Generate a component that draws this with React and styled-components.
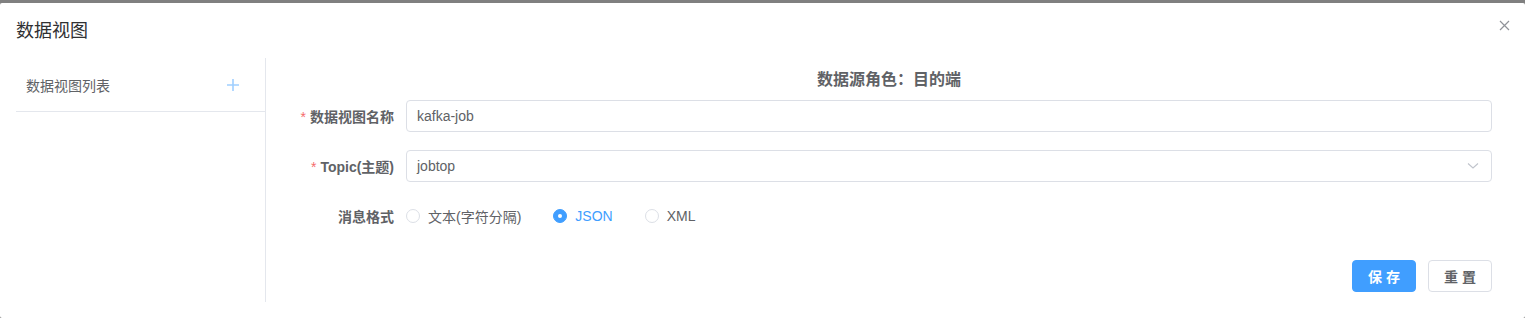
import React, { useState } from 'react'
import styled, { createGlobalStyle } from 'styled-components'

const Global = createGlobalStyle`
  html, body { margin: 0; padding: 0; background: #808080; }
  body {
    font-family: "Helvetica Neue", "Liberation Sans", "Noto Sans CJK SC", sans-serif;
    -webkit-font-smoothing: antialiased;
  }
`

const Dialog = styled.div`
  margin-top: 3px;
  width: 1525px;
  height: 315px;
  background: #fff;
  border-radius: 2px;
  box-sizing: border-box;
  display: flex;
  flex-direction: column;
`

const Header = styled.div`
  display: flex;
  align-items: center;
  justify-content: space-between;
  padding: 16px 16px 15px 16px;
  height: 24px;
`

const Title = styled.span`
  font-size: 18px;
  line-height: 24px;
  color: #303133;
`

const Close = styled.button`
  border: none;
  background: none;
  padding: 0;
  margin: -12px -2px 0 0;
  width: 14px;
  height: 14px;
  display: flex;
  align-items: center;
  justify-content: center;
  cursor: pointer;
`

const Body = styled.div`
  display: flex;
  padding: 0 13px 0 16px;
  height: 244px;
`

const Side = styled.aside`
  width: 249px;
  border-right: 1px solid #e4e7ed;
  display: flex;
  flex-direction: column;
`

const SideHead = styled.div`
  height: 53px;
  border-bottom: 1px solid #e4e7ed;
  display: flex;
  align-items: center;
  justify-content: space-between;
  padding: 0 26px 0 10px;
  font-size: 14px;
  color: #606266;
`

const Main = styled.section`
  flex: 1;
  padding: 10px 20px 0 20px;
  display: flex;
  flex-direction: column;
`

const RoleTitle = styled.h3`
  margin: 0 0 8px 0;
  text-align: center;
  font-size: 16px;
  line-height: 24px;
  font-weight: bold;
  color: #606266;
`

const Item = styled.div`
  display: flex;
  align-items: center;
  height: 32px;
  margin-bottom: 18px;
`

const Label = styled.label`
  width: 120px;
  box-sizing: border-box;
  padding-right: 12px;
  text-align: right;
  font-size: 14px;
  font-weight: bold;
  color: #606266;
  &::before {
    content: ${p => (p.$required ? '"*"' : '""')};
    color: #f56c6c;
    margin-right: 4px;
    font-weight: normal;
  }
`

const Field = styled.div`
  flex: 1;
  height: 32px;
  box-sizing: border-box;
  border: 1px solid #dcdfe6;
  border-radius: 4px;
  display: flex;
  align-items: center;
  padding: 0 12px 0 10px;
  font-size: 14px;
  color: #606266;
  justify-content: space-between;
`

const Radios = styled.div`
  display: flex;
  align-items: center;
`

const Radio = styled.label`
  display: flex;
  align-items: center;
  margin-right: 32px;
  font-size: 14px;
  color: ${p => (p.$on ? '#409eff' : '#606266')};
  cursor: pointer;
`

const Dot = styled.span`
  width: 14px;
  height: 14px;
  box-sizing: border-box;
  border-radius: 50%;
  border: 1px solid ${p => (p.$on ? '#409eff' : '#dcdfe6')};
  background: ${p => (p.$on ? '#409eff' : '#fff')};
  margin-right: 8px;
  display: flex;
  align-items: center;
  justify-content: center;
  &::after {
    content: "";
    width: 4px;
    height: 4px;
    border-radius: 50%;
    background: #fff;
    display: ${p => (p.$on ? 'block' : 'none')};
  }
`

const Actions = styled.div`
  display: flex;
  justify-content: flex-end;
  gap: 12px;
  margin-top: 10px;
`

const Btn = styled.button`
  width: 64px;
  height: 32px;
  box-sizing: border-box;
  border-radius: 4px;
  font-family: inherit;
  font-size: 14px;
  font-weight: bold;
  letter-spacing: 4px;
  padding: 0 0 0 4px;
  border: 1px solid ${p => (p.$primary ? '#409eff' : '#dcdfe6')};
  background: ${p => (p.$primary ? '#409eff' : '#fff')};
  color: ${p => (p.$primary ? '#fff' : '#606266')};
  cursor: pointer;
`

const formats = ['文本(字符分隔)', 'JSON', 'XML']

export default function App() {
  const [format, setFormat] = useState('JSON')

  return (
    <>
      <Global />
      <Dialog>
        <Header>
          <Title>数据视图</Title>
          <Close aria-label="close">
            <svg width="11" height="11" viewBox="0 0 11 11">
              <path d="M1 1 L10 10 M10 1 L1 10" stroke="#909399" strokeWidth="1.2" />
            </svg>
          </Close>
        </Header>
        <Body>
          <Side>
            <SideHead>
              <span>数据视图列表</span>
              <svg width="12" height="12" viewBox="0 0 12 12">
                <path d="M6 0 V12 M0 6 H12" stroke="#a0cfff" strokeWidth="1.6" />
              </svg>
            </SideHead>
          </Side>
          <Main>
            <RoleTitle>数据源角色：目的端</RoleTitle>
            <Item>
              <Label $required>数据视图名称</Label>
              <Field>kafka-job</Field>
            </Item>
            <Item>
              <Label $required>Topic(主题)</Label>
              <Field>
                <span>jobtop</span>
                <svg width="12" height="8" viewBox="0 0 12 8">
                  <path d="M1 1.5 L6 6 L11 1.5" fill="none" stroke="#c0c4cc" strokeWidth="1.1" />
                </svg>
              </Field>
            </Item>
            <Item>
              <Label>消息格式</Label>
              <Radios>
                {formats.map(f => (
                  <Radio key={f} $on={format === f} onClick={() => setFormat(f)}>
                    <Dot $on={format === f} />
                    {f}
                  </Radio>
                ))}
              </Radios>
            </Item>
            <Actions>
              <Btn $primary>保存</Btn>
              <Btn>重置</Btn>
            </Actions>
          </Main>
        </Body>
      </Dialog>
    </>
  )
}
